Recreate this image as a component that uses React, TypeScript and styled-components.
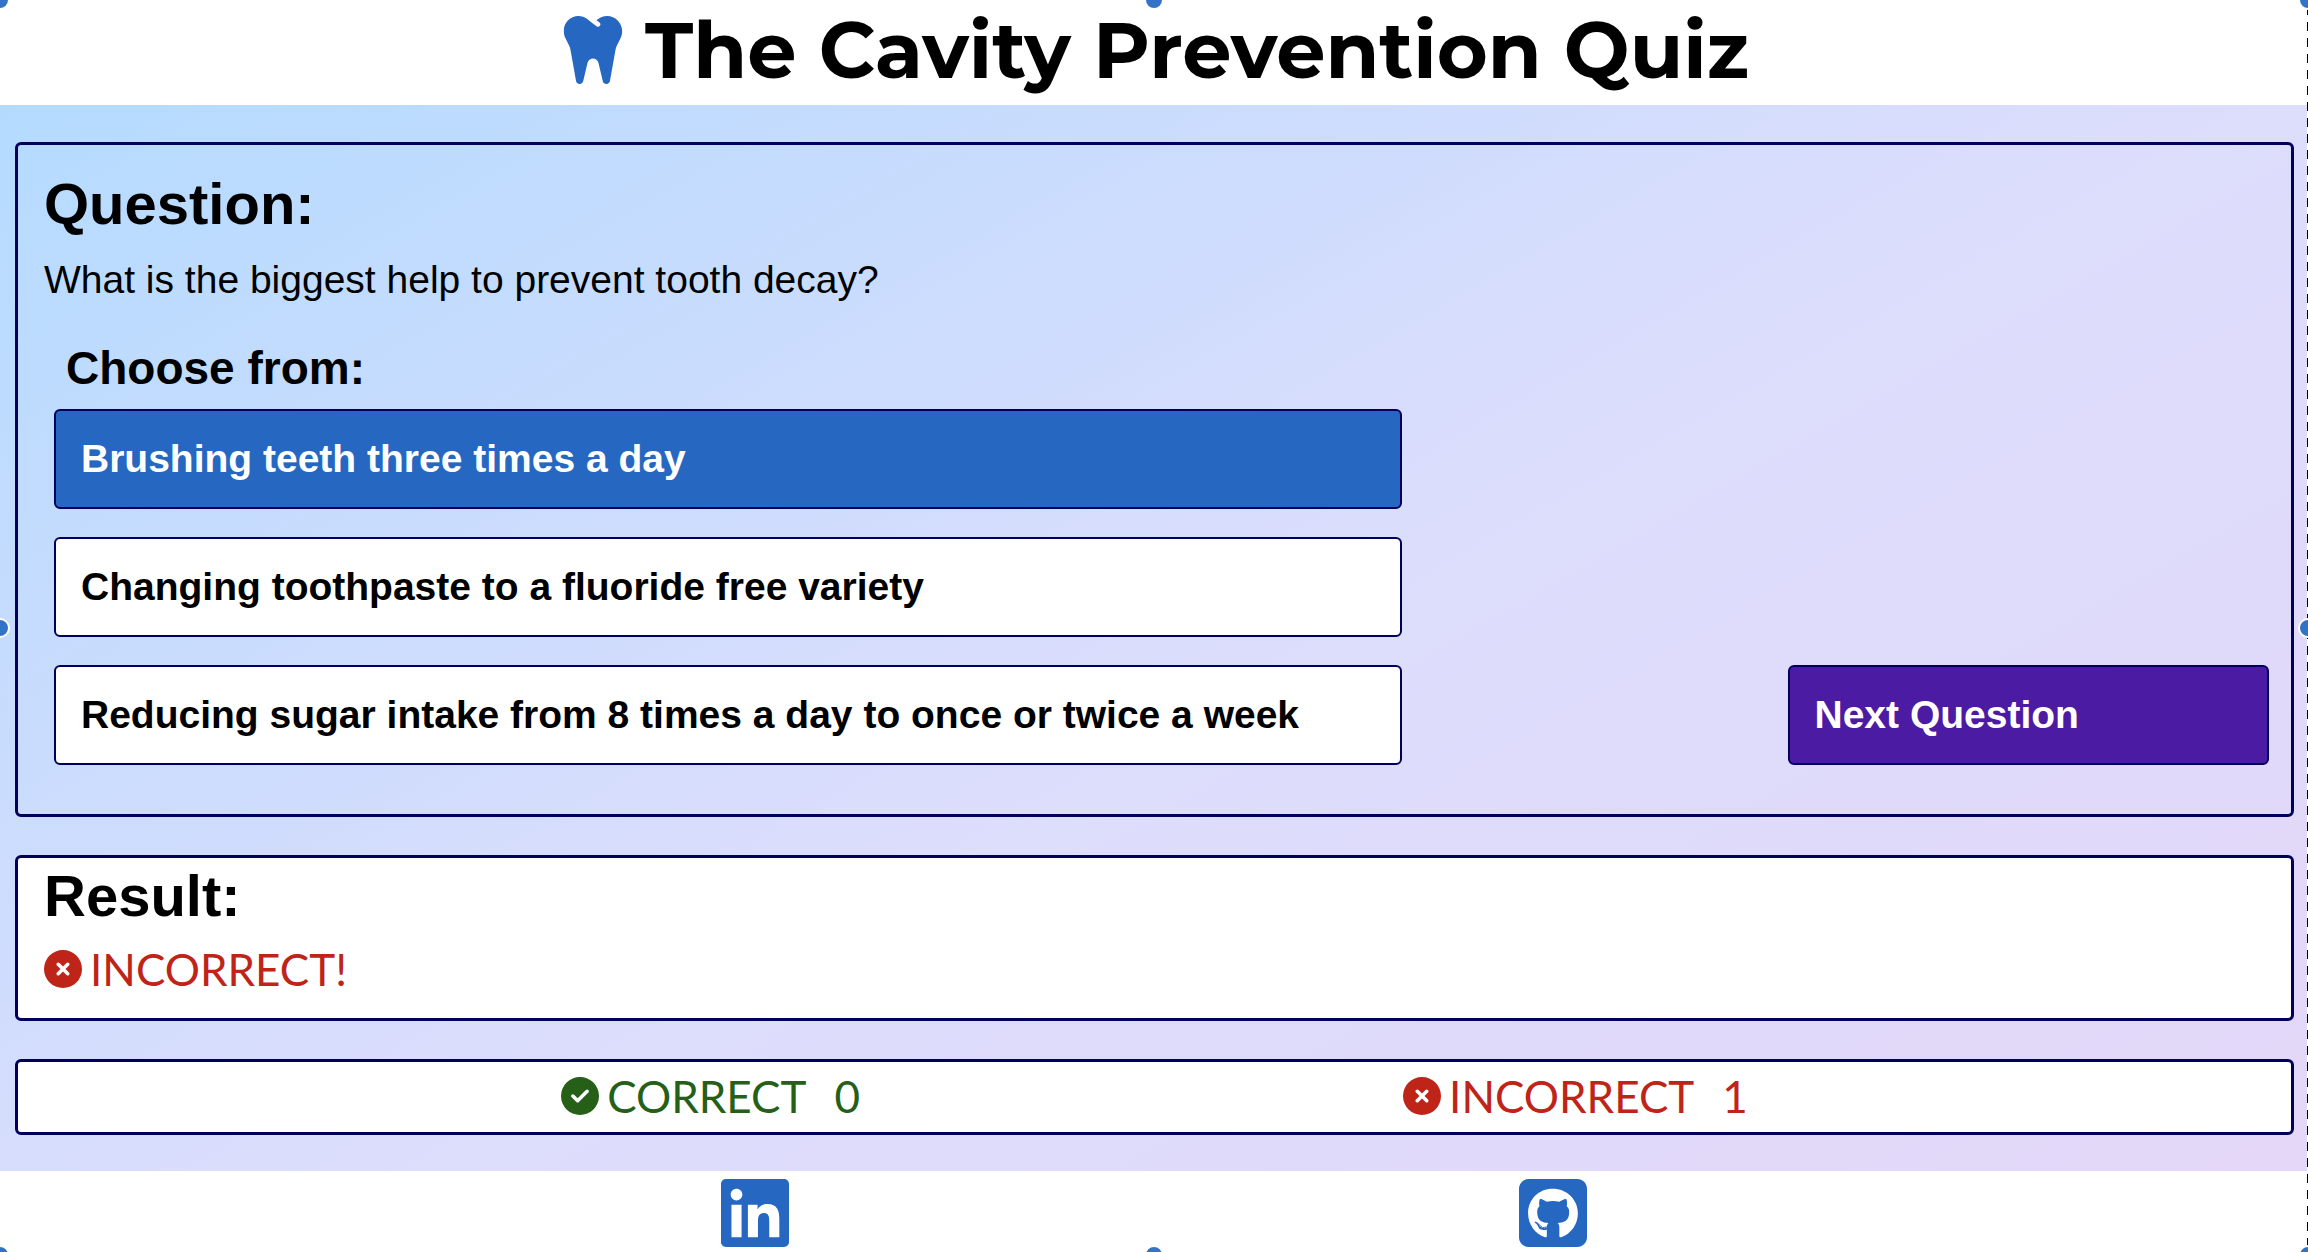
import React, { useState } from "react";
import styled, { createGlobalStyle } from "styled-components";
import {
  FaCircleCheck,
  FaCircleXmark,
  FaLinkedin,
  FaSquareGithub,
  FaTooth,
} from "react-icons/fa6";

const color = {
  navy: "#00005c",
  blue: "#2667c1",
  purple: "#4c1ba4",
  red: "#bf2419",
  green: "#265f18",
  handle: "#3273c8",
};

const sans = '"Liberation Sans", Helvetica, Arial, sans-serif';

const GlobalStyle = createGlobalStyle`
  *, *::before, *::after { box-sizing: border-box; }
  body {
    margin: 0;
    overflow: hidden;
    background: #fff;
    color: #000;
    font-family: ${sans};
  }
  h1, h2, h3, p { margin: 0; }
`;

const Page = styled.div`
  min-height: 100vh;
  display: flex;
  flex-direction: column;
`;

const Header = styled.header`
  display: flex;
  justify-content: center;
  align-items: center;
  gap: 18px;
  height: 105px;
  padding-bottom: 6px;
  background: #fff;
`;

const ToothIcon = styled(FaTooth)`
  width: 68px;
  height: 78px;
  color: ${color.blue};
`;

const Title = styled.h1`
  font-family: Montserrat, Inter, sans-serif;
  font-size: 78px;
  font-weight: 700;
  line-height: 98px;
  white-space: nowrap;
`;

const Main = styled.main`
  flex: 1;
  display: flex;
  flex-direction: column;
  gap: 38px;
  padding: 37px 14px 36px 15px;
  background: linear-gradient(150deg, #b4dbff, #dcddfc 52%, #e4d7f8);
`;

const Panel = styled.section`
  border: 3px solid ${color.navy};
  border-radius: 6px;
`;

const QuestionPanel = styled(Panel)`
  padding: 25px 22px 49px 26px;
`;

const ResultPanel = styled(Panel)`
  padding: 4px 26px 26px;
  background: #fff;
`;

const ScorePanel = styled(Panel)`
  display: flex;
  justify-content: space-evenly;
  padding: 11px 0 13px;
  background: #fff;
`;

const Heading = styled.h2`
  font-size: 58px;
  line-height: 68px;
`;

const QuestionText = styled.p`
  margin-top: 20px;
  font-size: 39px;
  line-height: 44px;
`;

const ChooseHeading = styled.h3`
  margin-top: 40px;
  padding-left: 22px;
  font-size: 46px;
  line-height: 52px;
`;

const AnswerRow = styled.div`
  display: grid;
  grid-template-columns: 28fr 10fr;
  column-gap: 17.4%;
  align-items: end;
  margin-top: 15px;
  padding-left: 10px;
`;

const Options = styled.div`
  display: flex;
  flex-direction: column;
  gap: 28px;
`;

const Button = styled.button<{ $tone: "plain" | "selected" | "next" }>`
  width: 100%;
  height: 100px;
  padding: 0 25px;
  border: 2px solid ${color.navy};
  border-radius: 6px;
  background: ${({ $tone }) =>
    $tone === "selected" ? color.blue : $tone === "next" ? color.purple : "#fff"};
  color: ${({ $tone }) => ($tone === "plain" ? "#000" : "#fff")};
  font-family: ${sans};
  font-size: 39px;
  font-weight: 700;
  line-height: 44px;
  text-align: left;
  cursor: pointer;
`;

const Verdict = styled.div<{ $good?: boolean }>`
  display: flex;
  align-items: center;
  gap: 8px;
  color: ${({ $good }) => ($good ? color.green : color.red)};
  font-family: Lato, sans-serif;
  font-size: 44px;
  line-height: 46px;

  svg {
    width: 38px;
    height: 38px;
  }
`;

const ResultVerdict = styled(Verdict)`
  margin-top: 16px;
`;

const Count = styled.span`
  margin-left: 20px;
`;

const Footer = styled.footer`
  display: flex;
  justify-content: space-evenly;
  padding-top: 3px;
  background: #fff;
`;

const SocialLink = styled.a`
  display: flex;
  padding: 0 10px;
  color: ${color.blue};

  svg {
    width: 68px;
    height: 78px;
  }
`;

const SelectionFrame = styled.div`
  position: fixed;
  inset: 0 0 -3px;
  pointer-events: none;
`;

const DashedEdge = styled.div`
  position: absolute;
  top: 0;
  bottom: 0;
  right: 0;
  width: 1px;
  background: repeating-linear-gradient(#fff 0 7px, #000 7px 16px);
  background-position-y: -1px;
`;

const Handle = styled.span<{ $x: number; $y: number }>`
  position: absolute;
  left: ${({ $x }) => $x}%;
  top: ${({ $y }) => $y}%;
  width: 20px;
  height: 20px;
  margin: -10px;
  border: 2px solid #fff;
  border-radius: 50%;
  background: ${color.handle};
`;

const handles = [
  [0, 0],
  [50, 0],
  [100, 0],
  [0, 50],
  [100, 50],
  [0, 100],
  [50, 100],
  [100, 100],
];

const options = [
  "Brushing teeth three times a day",
  "Changing toothpaste to a fluoride free variety",
  "Reducing sugar intake from 8 times a day to once or twice a week",
];

export default function App() {
  const [selected, setSelected] = useState(0);

  return (
    <>
      <GlobalStyle />
      <Page>
        <Header>
          <ToothIcon aria-hidden="true" />
          <Title>The Cavity Prevention Quiz</Title>
        </Header>
        <Main>
          <QuestionPanel>
            <Heading>Question:</Heading>
            <QuestionText>What is the biggest help to prevent tooth decay?</QuestionText>
            <ChooseHeading>Choose from:</ChooseHeading>
            <AnswerRow>
              <Options>
                {options.map((option, index) => (
                  <Button
                    key={option}
                    type="button"
                    $tone={index === selected ? "selected" : "plain"}
                    aria-pressed={index === selected}
                    onClick={() => setSelected(index)}
                  >
                    {option}
                  </Button>
                ))}
              </Options>
              <Button type="button" $tone="next">
                Next Question
              </Button>
            </AnswerRow>
          </QuestionPanel>
          <ResultPanel>
            <Heading>Result:</Heading>
            <ResultVerdict>
              <FaCircleXmark aria-hidden="true" />
              <span>INCORRECT!</span>
            </ResultVerdict>
          </ResultPanel>
          <ScorePanel>
            <Verdict $good>
              <FaCircleCheck aria-hidden="true" />
              <span>CORRECT</span>
              <Count>0</Count>
            </Verdict>
            <Verdict>
              <FaCircleXmark aria-hidden="true" />
              <span>INCORRECT</span>
              <Count>1</Count>
            </Verdict>
          </ScorePanel>
        </Main>
        <Footer>
          <SocialLink href="#linkedin" aria-label="LinkedIn">
            <FaLinkedin />
          </SocialLink>
          <SocialLink href="#github" aria-label="GitHub">
            <FaSquareGithub />
          </SocialLink>
        </Footer>
      </Page>
      <SelectionFrame aria-hidden="true">
        <DashedEdge />
        {handles.map(([x, y]) => (
          <Handle key={`${x}-${y}`} $x={x} $y={y} />
        ))}
      </SelectionFrame>
    </>
  );
}
